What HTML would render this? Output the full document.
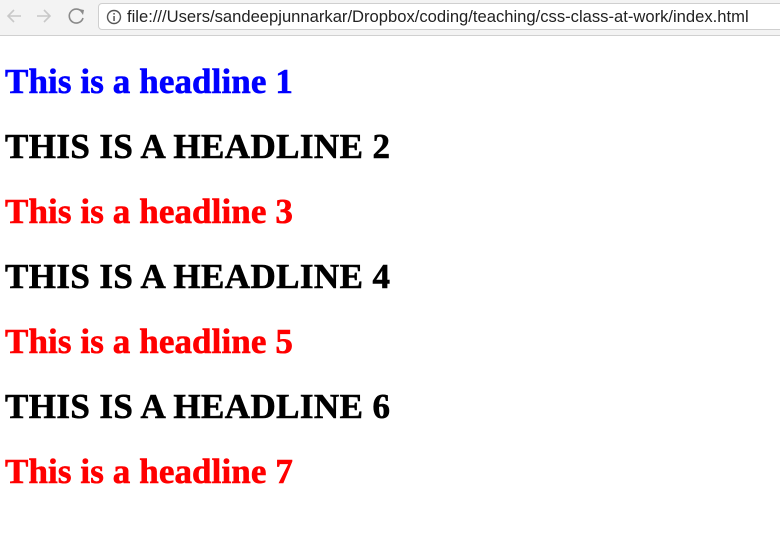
<!DOCTYPE html>
<html><head><style>
body{margin:0;width:780px;height:540px;background:#fff;overflow:hidden;position:relative;font-family:"Liberation Serif",serif}
.bar{position:absolute;left:0;top:0;width:780px;height:35px;background:#f3f3f3;border-bottom:1px solid #d0d0d0}
.url{position:absolute;left:98px;top:3px;width:690px;height:27px;background:#fff;border:1px solid #cfcfcf;border-radius:4px;box-sizing:border-box}
.url span{position:absolute;left:28px;top:3px;font:16.6px "Liberation Sans",sans-serif;color:#222;white-space:nowrap}
.h{position:absolute;left:5px;margin:0;font-weight:bold;font-size:35px;line-height:35px;white-space:nowrap;-webkit-text-stroke:0.6px currentColor;letter-spacing:0.1px}
.c{letter-spacing:0.4px}
</style></head><body>
<div class="bar">
<svg width="98" height="35" style="position:absolute;left:0;top:0">
<g fill="none" stroke="#c8c8c8" stroke-width="1.6"><path d="M21 16H8M14 10l-6 6 6 6"/><path d="M37 16h13M44 10l6 6-6 6"/></g>
<path d="M82 12a7 7 0 1 0 1 6" fill="none" stroke="#8a8a8a" stroke-width="1.6"/><path d="M79 9l5 1-1 5z" fill="#8a8a8a"/>
</svg>
<div class="url"><svg width="18" height="18" style="position:absolute;left:6px;top:4px"><circle cx="9" cy="9" r="6.5" fill="none" stroke="#555" stroke-width="1.4"/><rect x="8.3" y="8" width="1.5" height="5" fill="#555"/><rect x="8.3" y="5" width="1.5" height="1.6" fill="#555"/></svg><span>file:///Users/sandeepjunnarkar/Dropbox/coding/teaching/css-class-at-work/index.html</span></div>
</div>
<div class="h" style="top:64px;color:#00f">This is a headline 1</div>
<div class="h c" style="top:129px">THIS IS A HEADLINE 2</div>
<div class="h" style="top:194px;color:#f00">This is a headline 3</div>
<div class="h c" style="top:259px">THIS IS A HEADLINE 4</div>
<div class="h" style="top:324px;color:#f00">This is a headline 5</div>
<div class="h c" style="top:389px">THIS IS A HEADLINE 6</div>
<div class="h" style="top:454px;color:#f00">This is a headline 7</div>
</body></html>
